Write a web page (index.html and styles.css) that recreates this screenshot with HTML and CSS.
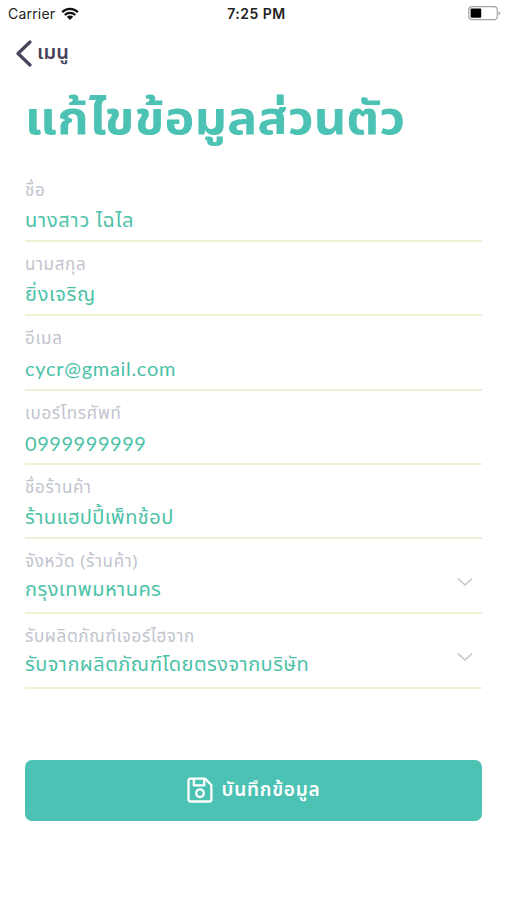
FILE: index.html
```html
<!DOCTYPE html>
<html lang="th">
<head>
    <meta charset="UTF-8">
    <meta name="viewport" content="width=device-width, initial-scale=1.0">
    <title>แก้ไขข้อมูลส่วนตัว</title>
    <link rel="stylesheet" href="styles.css">
</head>
<body>
    <div class="status-bar">
        <div class="carrier">
            <span>Carrier</span>
            <svg class="wifi" width="18" height="14" viewBox="0 0 18 14">
                <path d="M1.2 5.2a11 11 0 0 1 15.6 0M3.8 8a7.4 7.4 0 0 1 10.4 0" fill="none" stroke="#111" stroke-width="2.3"/>
                <path d="M9 13L5.8 9.8a4.5 4.5 0 0 1 6.4 0z" fill="#111"/>
            </svg>
        </div>
        <span class="time">7:25 PM</span>
        <div class="battery-wrap">
            <svg width="33" height="15" viewBox="0 0 33 15">
                <rect x="0.7" y="0.7" width="28.6" height="13" rx="3.5" fill="#fff" stroke="#a5a5a5" stroke-width="1.2"/>
                <rect x="2.6" y="2.6" width="10.6" height="9.2" rx="1" fill="#000"/>
                <path d="M30.6 5.2v4.2q1.6-.6 1.6-2.1t-1.6-2.1z" fill="#a5a5a5"/>
            </svg>
        </div>
    </div>

    <a class="back">
        <svg width="17" height="27" viewBox="0 0 17 27">
            <path d="M15 2L3 13.5L15 25" fill="none" stroke="#47435c" stroke-width="3.2" stroke-linecap="round" stroke-linejoin="round"/>
        </svg>
        <span>เมนู</span>
    </a>

    <h1>แก้ไขข้อมูลส่วนตัว</h1>

    <form>
        <div class="field">
            <label>ชื่อ</label>
            <div class="value wide">นางสาว ไฉไล</div>
        </div>
        <div class="field">
            <label>นามสกุล</label>
            <div class="value wide">ยิ่งเจริญ</div>
        </div>
        <div class="field">
            <label>อีเมล</label>
            <div class="value latin">cycr@gmail.com</div>
        </div>
        <div class="field">
            <label>เบอร์โทรศัพท์</label>
            <div class="value latin phone">0999999999</div>
        </div>
        <div class="field">
            <label>ชื่อร้านค้า</label>
            <div class="value">ร้านแฮปปี้เพ็ทช้อป</div>
        </div>
        <div class="field select">
            <div>
                <label>จังหวัด (ร้านค้า)</label>
                <div class="value">กรุงเทพมหานคร</div>
            </div>
            <svg width="16" height="10" viewBox="0 0 16 10"><path d="M1 1.5l7 6.5 7-6.5" fill="none" stroke="#c2c4ce" stroke-width="1.5"/></svg>
        </div>
        <div class="field select">
            <div>
                <label>รับผลิตภัณฑ์เจอร์ไฮจาก</label>
                <div class="value">รับจากผลิตภัณฑ์โดยตรงจากบริษัท</div>
            </div>
            <svg width="16" height="10" viewBox="0 0 16 10"><path d="M1 1.5l7 6.5 7-6.5" fill="none" stroke="#c2c4ce" stroke-width="1.5"/></svg>
        </div>

        <button type="button">
            <svg width="26" height="26" viewBox="0 0 26 26" fill="none" stroke="#fff" stroke-width="2.3" stroke-linejoin="round">
                <path d="M3.5 1.6H18L24.4 8V22.5a2 2 0 0 1-2 2H3.5a2 2 0 0 1-2-2V3.6a2 2 0 0 1 2-2z"/>
                <path d="M6.8 2v6.4h10.4V2"/>
                <circle cx="13" cy="16.2" r="3.8"/>
            </svg>
            <span>บันทึกข้อมูล</span>
        </button>
    </form>
</body>
</html>
```
FILE: styles.css
```css
* {
    margin: 0;
    padding: 0;
    box-sizing: border-box;
}
body {
    height: 900px;
    background-color: #fff;
    font-family: "Noto Sans Thai", "Prompt", "Noto Sans", sans-serif;
}
.status-bar {
    display: grid;
    grid-template-columns: 1fr auto 1fr;
    align-items: center;
    height: 27px;
    padding: 0 6px 0 8px;
    font-family: Inter, sans-serif;
    font-size: 14px;
    color: #222;
}
.carrier {
    display: flex;
    align-items: center;
    gap: 6px;
    letter-spacing: 0.2px;
}
.time {
    padding-left: 4px;
    font-weight: 600;
    letter-spacing: 0.5px;
}
.battery-wrap {
    display: flex;
    justify-content: flex-end;
}
.back {
    display: flex;
    align-items: center;
    gap: 5px;
    height: 52px;
    padding-left: 15px;
    font-size: 20px;
    font-weight: 600;
    color: #47435c;
}
h1 {
    width: fit-content;
    height: 89px;
    padding-left: 23px;
    line-height: 81px;
    font-size: 47px;
    font-weight: 700;
    color: #4cc2b4;
    white-space: nowrap;
    transform: scaleX(1.075);
    transform-origin: left;
}
form {
    padding: 0 25px;
}
.field {
    height: 74.2px;
    padding-top: 10px;
    border-bottom: 2px solid #f0f0d4;
    white-space: nowrap;
}
.field label {
    display: block;
    line-height: 26px;
    font-size: 17px;
    letter-spacing: 0.65px;
    color: #c2c4ce;
}
.value {
    line-height: 34px;
    font-size: 20px;
    letter-spacing: 0.45px;
    color: #4cc2a8;
}
.wide {
    letter-spacing: 0.75px;
}
.latin {
    line-height: 32px;
    font-family: Lato, sans-serif;
    letter-spacing: 0.7px;
}
.phone {
    letter-spacing: 0.55px;
}
.select {
    display: flex;
    justify-content: space-between;
    height: 75px;
    padding-right: 9px;
}
.select .value {
    line-height: 31px;
}
.select svg {
    margin-top: 28px;
}
button {
    display: flex;
    justify-content: center;
    align-items: center;
    gap: 9px;
    width: 100%;
    height: 61px;
    margin-top: 71px;
    border: none;
    border-radius: 7px;
    background-color: #4cc2b4;
    font-family: inherit;
    font-size: 19px;
    font-weight: 600;
    letter-spacing: 0.75px;
    color: #fff;
}
```
